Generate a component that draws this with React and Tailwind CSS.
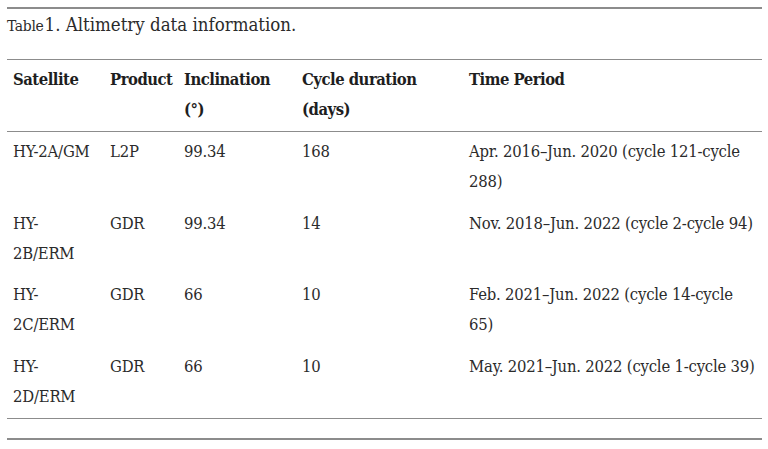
const rows = [
  { sat: ['HY-2A/GM'], product: 'L2P', incl: '99.34', cycle: '168', period: ['Apr. 2016–Jun. 2020 (cycle 121-cycle', '288)'] },
  { sat: ['HY-', '2B/ERM'], product: 'GDR', incl: '99.34', cycle: '14', period: ['Nov. 2018–Jun. 2022 (cycle 2-cycle 94)'] },
  { sat: ['HY-', '2C/ERM'], product: 'GDR', incl: '66', cycle: '10', period: ['Feb. 2021–Jun. 2022 (cycle 14-cycle', '65)'] },
  { sat: ['HY-', '2D/ERM'], product: 'GDR', incl: '66', cycle: '10', period: ['May. 2021–Jun. 2022 (cycle 1-cycle 39)'] },
];

function Lines({ items }) {
  return items.map((t, i) => (
    <span key={i} className="block whitespace-nowrap">
      {t}
    </span>
  ));
}

export default function App() {
  return (
    <div className="w-[768px] h-[449px] bg-white pl-[7px] pr-[6px] pt-[7px] text-[#2b2b2b] font-['DejaVu_Serif_Condensed','DejaVu_Serif',serif]">
      <div className="h-[2px] bg-[#8c8c8c]" />

      <div className="mt-[3px] leading-[25px] text-[18.5px] whitespace-nowrap">
        <span className="text-[15.5px] tracking-[-0.3px]">Table</span>
        <span className="ml-[1px]">1. Altimetry data information.</span>
      </div>

      <table className="mt-[20px] w-full table-fixed border-collapse text-[16.5px] tracking-[-0.2px] leading-[30px]">
        <colgroup>
          <col className="w-[97px]" />
          <col className="w-[74px]" />
          <col className="w-[118px]" />
          <col className="w-[167px]" />
          <col />
        </colgroup>
        <thead>
          <tr className="border-y border-[#8c8c8c] text-left text-[#1e1e1e] tracking-[-0.5px]">
            <th className="pl-[6px] pt-[5px] pb-[5.5px] align-top font-bold">Satellite</th>
            <th className="pl-[6px] pt-[5px] pb-[5.5px] align-top font-bold">Product</th>
            <th className="pl-[6px] pt-[5px] pb-[5.5px] align-top font-bold">
              <Lines items={['Inclination', '(°)']} />
            </th>
            <th className="pl-[6px] pt-[5px] pb-[5.5px] align-top font-bold">
              <Lines items={['Cycle duration', '(days)']} />
            </th>
            <th className="pl-[6px] pt-[5px] pb-[5.5px] align-top font-bold">Time Period</th>
          </tr>
        </thead>
        <tbody>
          {rows.map((r, i) => (
            <tr key={i} className={i === rows.length - 1 ? 'border-b border-[#8c8c8c]' : ''}>
              <td className="pl-[6px] py-[5.75px] h-[71.5px] align-top">
                <Lines items={r.sat} />
              </td>
              <td className="pl-[6px] py-[5.75px] align-top">{r.product}</td>
              <td className="pl-[6px] py-[5.75px] align-top">{r.incl}</td>
              <td className="pl-[6px] py-[5.75px] align-top">{r.cycle}</td>
              <td className="pl-[6px] py-[5.75px] align-top">
                <Lines items={r.period} />
              </td>
            </tr>
          ))}
        </tbody>
      </table>

      <div className="mt-[19px] h-[2px] bg-[#8c8c8c]" />
    </div>
  );
}
